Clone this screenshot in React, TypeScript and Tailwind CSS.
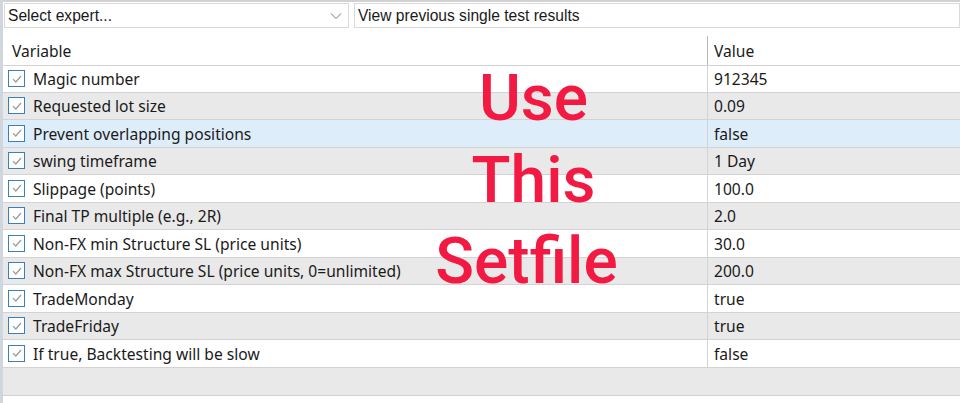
import React from "react";

const rows = [
  { name: "Magic number", value: "912345" },
  { name: "Requested lot size", value: "0.09" },
  { name: "Prevent overlapping positions", value: "false" },
  { name: "swing timeframe", value: "1 Day" },
  { name: "Slippage (points)", value: "100.0" },
  { name: "Final TP multiple (e.g., 2R)", value: "2.0" },
  { name: "Non-FX min Structure SL (price units)", value: "30.0" },
  { name: "Non-FX max Structure SL (price units, 0=unlimited)", value: "200.0" },
  { name: "TradeMonday", value: "true" },
  { name: "TradeFriday", value: "true" },
  { name: "If true, Backtesting will be slow", value: "false" },
];

function CheckBox() {
  return (
    <span className="flex h-[17px] w-[17px] shrink-0 items-center justify-center border border-[#3a7fbd] bg-white">
      <svg width="12" height="12" viewBox="0 0 12 12" fill="none">
        <path d="M2 6.2 L4.8 9 L10 3" stroke="#9a9a9a" strokeWidth="1.2" />
      </svg>
    </span>
  );
}

export default function App() {
  return (
    <div className="relative h-[403px] w-[960px] overflow-hidden border-l-[3px] border-[#cfd6de] bg-white font-['Noto_Sans',sans-serif] text-[15.6px] text-[#1a1a1a]">
      {/* barra de sus */}
      <div className="h-[2px] bg-[#d2d2d2]" />
      <div className="flex gap-[5px] pl-[1px] pt-[1px] font-['Liberation_Sans',Arial,sans-serif] text-[15.6px]">
        <div className="flex h-[25px] w-[345px] items-center justify-between border border-[#d9d9d9] pl-[3px] pr-[6px]">
          <span>Select expert...</span>
          <svg width="12" height="8" viewBox="0 0 12 8" fill="none">
            <path d="M1 1.5 L6 6.5 L11 1.5" stroke="#777" strokeWidth="1" />
          </svg>
        </div>
        <div className="flex h-[25px] flex-1 items-center border border-[#d9d9d9] pl-[3px]">
          View previous single test results
        </div>
      </div>

      {/* tabel */}
      <div className="mt-[8px]">
        <div className="grid h-[29px] grid-cols-[704px_1fr] items-center">
          <div className="pl-[9px] pt-[3px]">Variable</div>
          <div className="flex h-full items-center border-l border-[#b8b8b8] pl-[6px] pt-[3px]">Value</div>
        </div>
        {rows.map((r, i) => (
          <div
            key={r.name}
            className={
              "grid h-[27.5px] grid-cols-[704px_1fr] border-b border-[#d3d3d3] " +
              (i === 0 ? "border-t " : "") +
              (i === 2 ? "bg-[#deedfa]" : i % 2 === 1 ? "bg-[#e9e9e9]" : "bg-white")
            }
          >
            <div className="flex items-center gap-[8px] pl-[5px]">
              <CheckBox />
              <span className="pt-[2px]">{r.name}</span>
            </div>
            <div className="flex items-center border-l border-[#d3d3d3] pl-[6px] pt-[2px]">{r.value}</div>
          </div>
        ))}
        <div className="h-[28px] border-b border-[#d3d3d3] bg-[#e9e9e9]" />
      </div>

      {/* text rosu peste tabel */}
      <div className="pointer-events-none absolute left-[388px] top-[58px] flex w-[285px] flex-col items-center font-['Roboto',sans-serif] text-[64px] font-medium leading-[81.5px] text-[#f21a42]">
        <span>Use</span>
        <span>This</span>
        <span className="mr-[14px]">Setfile</span>
      </div>
    </div>
  );
}
